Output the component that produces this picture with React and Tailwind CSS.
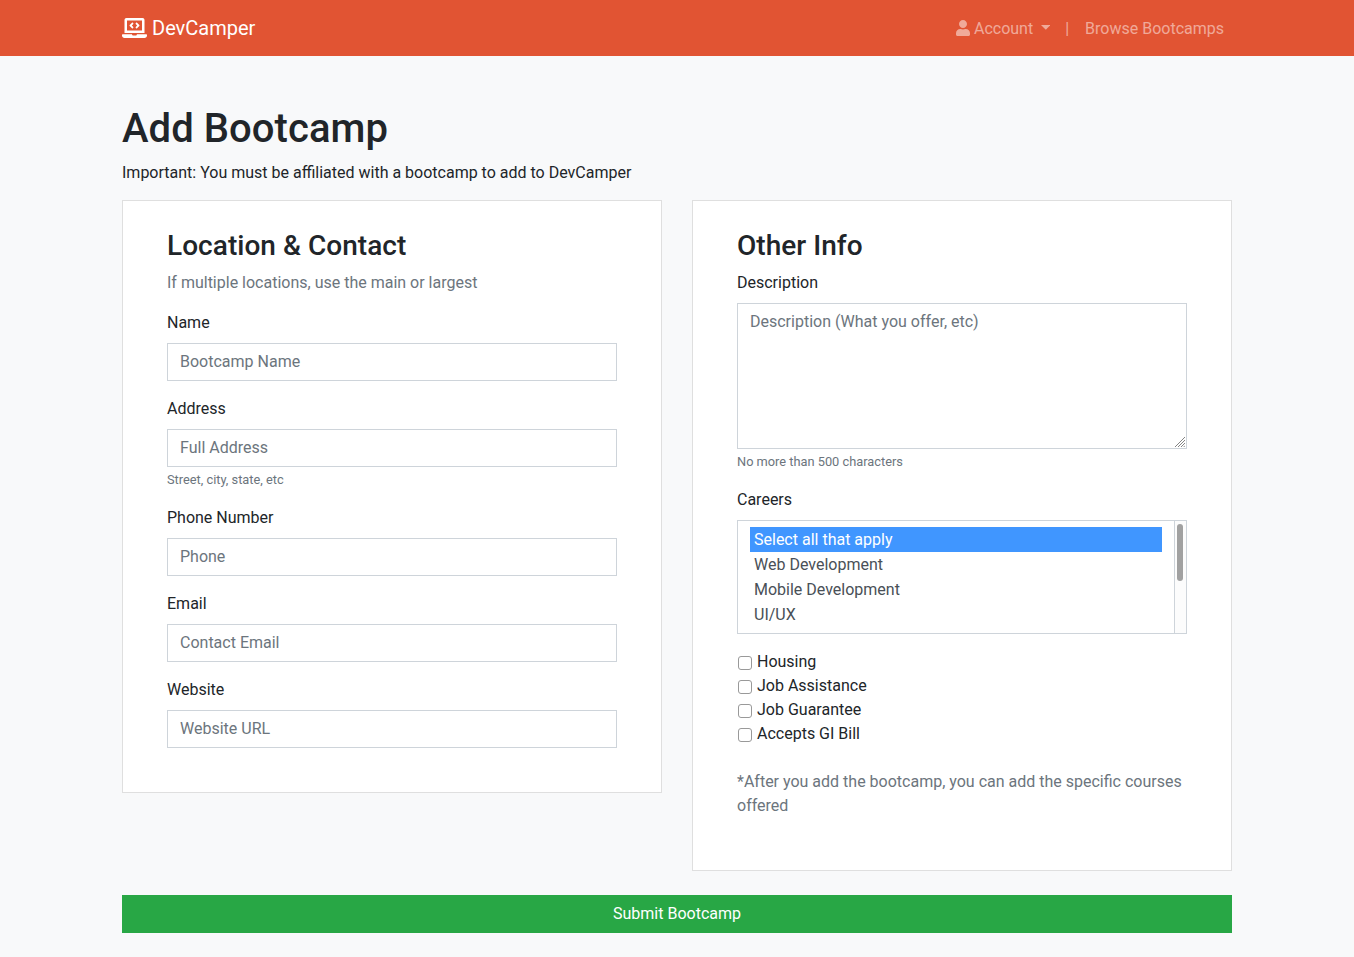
import React from 'react';
import { FaLaptopCode, FaUser } from 'react-icons/fa';

const fieldClass =
  'block w-full h-[38px] border border-[#ced4da] bg-white px-3 py-1.5 text-base text-[#495057] placeholder:text-[#6c757d] placeholder:opacity-100 outline-none';

function Field({ label, placeholder, hint, type = 'text' }) {
  return (
    <div className="mb-4">
      <label className="mb-2 block">{label}</label>
      <input type={type} placeholder={placeholder} className={fieldClass} />
      {hint && <Hint>{hint}</Hint>}
    </div>
  );
}

function Hint({ children }) {
  return <small className="mt-[3px] mb-[17px] block text-[12.8px] leading-[19.2px] text-[#6c757d]">{children}</small>;
}

function Card({ title, children }) {
  return (
    <section className="w-[540px] border border-[#dfdfdf] bg-white px-11 py-7">
      <h3 className="mb-2 text-[28px] leading-[33.6px] font-medium tracking-[0.04px]">{title}</h3>
      {children}
    </section>
  );
}

function CareerList() {
  const careers = ['Select all that apply', 'Web Development', 'Mobile Development', 'UI/UX'];
  return (
    <div className="mb-4">
      <label className="mb-2 block">Careers</label>
      <div className="flex h-[114px] border border-[#ced4da] text-[#495057]">
        <ul role="listbox" className="flex-1 px-3 py-1.5">
          {careers.map((career, i) => (
            <li
              key={career}
              role="option"
              aria-selected={i === 0}
              className={i === 0 ? 'h-[25px] bg-[#4096ff] px-1 pt-px text-white' : 'h-[25px] px-1 pt-px'}
            >
              {career}
            </li>
          ))}
        </ul>
        <div className="w-3 border-l border-[#ced4da] bg-[#fcfcfc] pt-[3px] pl-0.5">
          <div className="h-[57px] w-1.5 rounded-full bg-[#a1a1a1]" />
        </div>
      </div>
    </div>
  );
}

export default function App() {
  return (
    <div className="min-h-[957px] bg-[#f8f9fa] font-['Roboto',sans-serif] text-base leading-6 text-[#212529]">
      <nav className="h-14 bg-[#e15433]">
        <div className="mx-auto flex h-full w-[1110px] items-center justify-between">
          <a className="flex items-center text-xl leading-[30px] text-white">
            <FaLaptopCode className="mr-[5px] h-5 w-[25px]" />
            DevCamper
          </a>
          <div className="flex items-center text-white/50">
            <a className="flex items-center pr-[7px] pl-2">
              <FaUser className="mr-1 h-4 w-3.5" />
              <span className="pt-0.5">Account</span>
              <svg className="mb-0.5 ml-2 h-[5px] w-[9px]" viewBox="0 0 9 5" fill="currentColor">
                <path d="M0 0h9.6L4.8 4.8z" />
              </svg>
            </a>
            <span className="px-2 pt-0.5">|</span>
            <a className="px-2 pt-0.5">Browse Bootcamps</a>
          </div>
        </div>
      </nav>
      <main className="mx-auto w-[1110px] pt-[49px] pb-6">
        <h1 className="mb-2 text-[40px] leading-[48px] font-medium tracking-[0.06px]">Add Bootcamp</h1>
        <p className="mb-[15px]">Important: You must be affiliated with a bootcamp to add to DevCamper</p>
        <form>
          <div className="flex items-start justify-between">
            <Card title="Location & Contact">
              <p className="mb-4 text-[#6c757d]">If multiple locations, use the main or largest</p>
              <Field label="Name" placeholder="Bootcamp Name" />
              <Field label="Address" placeholder="Full Address" hint="Street, city, state, etc" />
              <Field label="Phone Number" placeholder="Phone" />
              <Field label="Email" placeholder="Contact Email" />
              <Field label="Website" placeholder="Website URL" />
            </Card>
            <Card title="Other Info">
              <div className="mb-4">
                <label className="mb-2 block">Description</label>
                <div className="relative">
                  <textarea
                    placeholder="Description (What you offer, etc)"
                    className="block h-[146px] w-full resize-none border border-[#ced4da] bg-white px-3 py-1.5 text-[#495057] outline-none placeholder:text-[#6c757d] placeholder:opacity-100"
                  />
                  <svg
                    className="absolute right-0.5 bottom-0.5 size-[10px]"
                    viewBox="0 0 10 10"
                    fill="none"
                    stroke="#858585"
                    strokeWidth="1"
                  >
                    <path d="M0 10L10 0M3 10L10 3M6 10L10 6M8.7 10L10 8.7" />
                  </svg>
                </div>
                <Hint>No more than 500 characters</Hint>
              </div>
              <CareerList />
              {['Housing', 'Job Assistance', 'Job Guarantee', 'Accepts GI Bill'].map((option) => (
                <label key={option} className="flex h-6 items-center">
                  <input
                    type="checkbox"
                    className="mt-0.5 mr-[5px] ml-px size-3.5 appearance-none rounded-[3px] border border-[#999] bg-white checked:bg-[#4096ff]"
                  />
                  {option}
                </label>
              ))}
              <p className="my-6 text-[#6c757d]">
                *After you add the bootcamp, you can add the specific courses offered
              </p>
            </Card>
          </div>
          <button type="button" className="mt-6 block h-[38px] w-full bg-[#28a745] text-center text-white">
            Submit Bootcamp
          </button>
        </form>
      </main>
    </div>
  );
}
